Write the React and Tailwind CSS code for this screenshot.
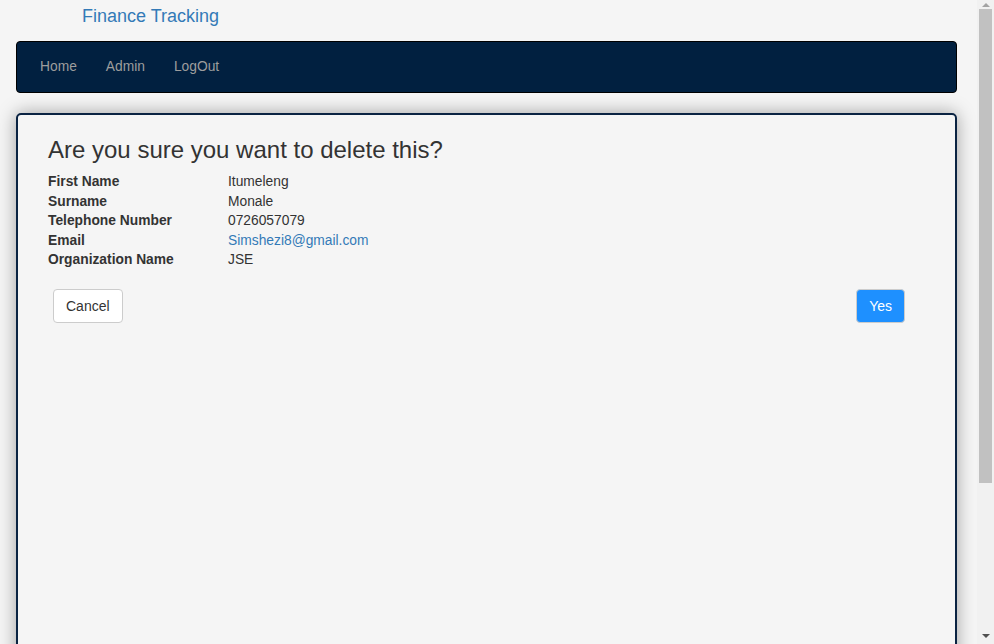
export default function App() {
  const rows = [
    { label: "First Name", value: "Itumeleng" },
    { label: "Surname", value: "Monale" },
    { label: "Telephone Number", value: "0726057079" },
    { label: "Email", value: "Simshezi8@gmail.com", link: true },
    { label: "Organization Name", value: "JSE" },
  ];

  return (
    <div className="flex h-[644px] overflow-hidden bg-[#f5f5f5] font-['Liberation_Sans',Arial,sans-serif] text-[14px] text-[#333]">
      <div className="flex-1 min-w-0">
        <div className="pl-[82px] pt-[6px] h-[41px] text-[18px] text-[#337ab7] leading-[21px]">Finance Tracking</div>
        <nav className="ml-4 w-[941px] h-[52px] rounded-[4px] border border-black bg-[#012040] flex items-center pl-[23px] gap-[29px] text-[13.8px] text-[#9d9d9d]">
          <span>Home</span>
          <span>Admin</span>
          <span>LogOut</span>
        </nav>
        <div className="ml-4 mt-5 w-[941px] h-[600px] rounded-[5px] border-2 border-[#0a2342] shadow-[0_0_18px_rgba(0,0,0,0.35)] px-[30px] pt-[20px]">
          <h2 className="text-[24px] leading-[30px] text-[#333] mb-[7px]">Are you sure you want to delete this?</h2>
          <div className="leading-[19.5px] text-[13.8px]">
            {rows.map((r) => (
              <div key={r.label} className="flex">
                <div className="w-[180px] font-bold">{r.label}</div>
                <div className={r.link ? "text-[#337ab7]" : ""}>{r.value}</div>
              </div>
            ))}
          </div>
          <div className="flex justify-between mt-[19px] pl-[5px] pr-[20px]">
            <button className="h-[34px] px-3 pt-[2px] rounded-[4px] border border-[#ccc] bg-white text-[#333]">Cancel</button>
            <button className="h-[34px] px-3 pt-[2px] rounded-[4px] border border-[#ccc] bg-[#1e90ff] text-white">Yes</button>
          </div>
        </div>
      </div>
      <div className="w-[17px] h-[644px] bg-[#f1f1f1] flex flex-col items-center">
        <div className="h-[9px] flex items-center justify-center">
          <div className="w-0 h-0 border-l-[4px] border-r-[4px] border-b-[4px] border-l-transparent border-r-transparent border-b-[#a3a3a3]" />
        </div>
        <div className="w-[13px] h-[474px] bg-[#c1c1c1]" />
        <div className="flex-1" />
        <div className="h-[17px] flex items-center justify-center">
          <div className="w-0 h-0 border-l-[4px] border-r-[4px] border-t-[4px] border-l-transparent border-r-transparent border-t-[#505050]" />
        </div>
      </div>
    </div>
  );
}
